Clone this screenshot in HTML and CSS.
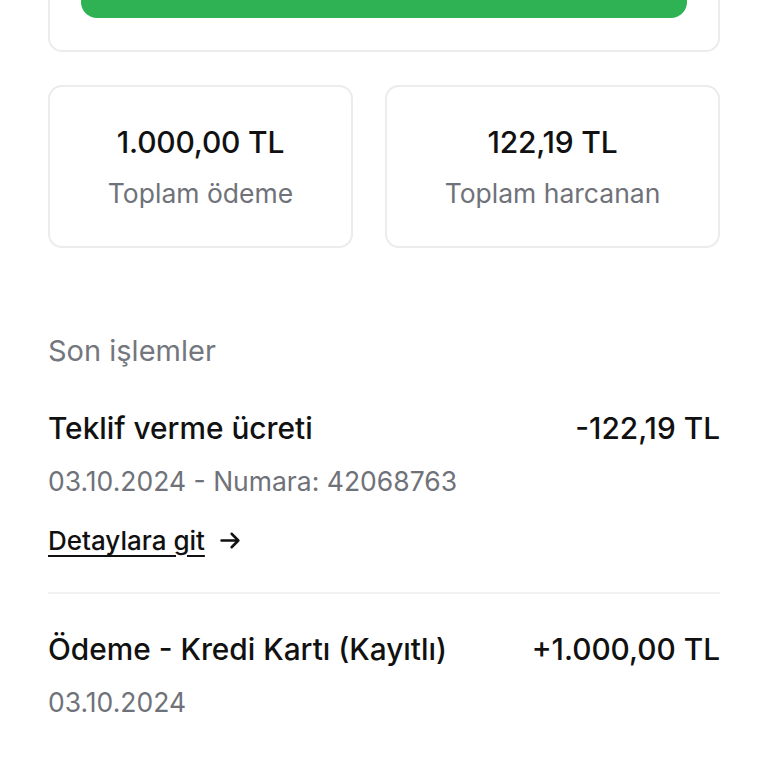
FILE: index.html
```html
<!DOCTYPE html>
<html lang="tr">
<head>
    <meta charset="UTF-8">
    <meta name="viewport" content="width=device-width, initial-scale=1.0">
    <title>Hesap hareketleri</title>
    <link rel="stylesheet" href="styles.css">
</head>
<body>
    <div class="page">
        <div class="card top-card">
            <div class="btn-green"></div>
        </div>

        <div class="stats">
            <div class="card stat">
                <div class="stat-value">1.000,00 TL</div>
                <div class="stat-label">Toplam ödeme</div>
            </div>
            <div class="card stat">
                <div class="stat-value">122,19 TL</div>
                <div class="stat-label">Toplam harcanan</div>
            </div>
        </div>

        <h2 class="section-title">Son işlemler</h2>

        <div class="tx">
            <div class="tx-row">
                <span class="tx-name">Teklif verme ücreti</span>
                <span class="tx-amount">-122,19 TL</span>
            </div>
            <div class="tx-meta">03.10.2024 - Numara: 42068763</div>
            <a class="tx-link" href="#">
                <span>Detaylara git</span>
                <svg width="27" height="27" viewBox="0 0 24 24" fill="none" stroke="#111" stroke-width="2.2" stroke-linecap="round" stroke-linejoin="round">
                    <path d="M4 12h15M13 6l6 6-6 6"/>
                </svg>
            </a>
        </div>

        <div class="tx">
            <div class="tx-row">
                <span class="tx-name">Ödeme - Kredi Kartı (Kayıtlı)</span>
                <span class="tx-amount">+1.000,00 TL</span>
            </div>
            <div class="tx-meta">03.10.2024</div>
        </div>
    </div>
</body>
</html>
```

FILE: styles.css
```css
body {
    margin: 0;
    background: #fff;
    font-family: Inter, "Noto Sans", sans-serif;
    color: #161616;
    overflow: hidden;
}

.page {
    padding: 0 48px;
}

.card {
    background: #fff;
    border: 2px solid #ececee;
    border-radius: 14px;
    box-sizing: border-box;
}

.top-card {
    margin-top: -60px;
    padding: 0 31px 32px;
    border-top: none;
    border-radius: 0 0 14px 14px;
}

.btn-green {
    height: 78px;
    border-radius: 0 0 16px 16px;
    background: #2eb253;
}

.stats {
    display: grid;
    grid-template-columns: 305px 1fr;
    gap: 32px;
    margin-top: 33px;
}

.stat {
    height: 163px;
    display: flex;
    flex-direction: column;
    align-items: center;
    justify-content: center;
    gap: 17px;
}

.stat-value {
    font-size: 30px;
    font-weight: 500;
    color: #111;
    letter-spacing: -0.2px;
}

.stat-label {
    font-size: 26.5px;
    color: #6f7279;
}

.section-title {
    margin: 85px 0 5px;
    font-size: 29px;
    font-weight: 400;
    color: #74777d;
}

.tx {
    padding: 37px 0 36px;
    border-bottom: 2px solid #f2f2f3;
}

.tx:last-child {
    border-bottom: none;
}

.tx-row {
    display: flex;
    justify-content: space-between;
    align-items: baseline;
}

.tx-name,
.tx-amount {
    font-size: 29.8px;
    font-weight: 500;
    color: #111;
}

.tx-meta {
    margin-top: 19px;
    font-size: 26.5px;
    color: #6f7279;
}

.tx-link {
    display: inline-flex;
    align-items: center;
    gap: 12px;
    margin-top: 28px;
    color: #111;
    font-size: 26px;
    font-weight: 500;
    text-decoration: none;
}

.tx-link span {
    text-decoration: underline;
    text-underline-offset: 5px;
    text-decoration-thickness: 2px;
}
```
